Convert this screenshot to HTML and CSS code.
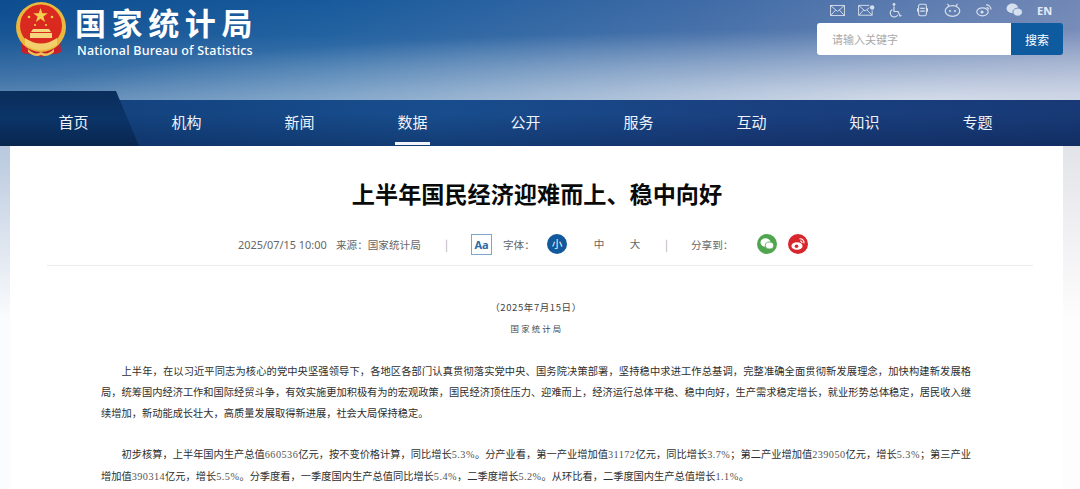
FILE: index.html
```html
<!DOCTYPE html>
<html lang="zh-CN">
<head>
<meta charset="utf-8">
<title>上半年国民经济迎难而上、稳中向好</title>
<link rel="stylesheet" href="styles.css">
</head>
<body>
<header class="masthead">
  <div class="brand">
    <svg class="emblem" viewBox="0 0 52 56" aria-hidden="true">
      <path d="M7 38 L6 50 Q12 53 17 52 L26 55 L35 52 Q40 53 46 50 L45 38 Z" fill="#c8202a"/>
      <circle cx="26" cy="25" r="25" fill="#eab83c"/>
      <circle cx="26" cy="23.500" r="21" fill="#da2a1f"/>
      <path d="M10 36 Q26 47 42 36 L42 43 Q26 53 10 43 Z" fill="#f2cf6a"/>
      <polygon points="25.500,6 27.300,11.200 32.800,11.300 28.400,14.600 30,19.900 25.500,16.800 21,19.900 22.600,14.600 18.200,11.300 23.700,11.200" fill="#f5cf50"/>
      <circle cx="14" cy="15" r="1.300" fill="#f5cf50"/><circle cx="37" cy="15" r="1.300" fill="#f5cf50"/>
      <circle cx="20" cy="23" r="1.100" fill="#f5cf50"/><circle cx="31" cy="23" r="1.100" fill="#f5cf50"/>
      <path d="M18 27 H34 L36 30 H16 Z M15 31 H37 V36 H15 Z" fill="#f4d67c"/>
      <path d="M13 47 Q20 54 26 50 Q32 54 39 47 L39 50 Q32 56 26 53 Q20 56 13 50 Z" fill="#eec058"/>
    </svg>
    <div class="brand-text">
      <div class="brand-cn">国家统计局</div>
      <div class="brand-en">National Bureau of Statistics</div>
    </div>
  </div>
  <div class="tools">
    <div class="tool-icons">
      <svg class="ti w15" viewBox="0 0 16 12"><rect x=".6" y=".6" width="14.800" height="10.800"/><path d="M1 1 L8 7 L15 1 M1 11 L6 5.500 M15 11 L10 5.500"/></svg>
      <svg class="ti w17" viewBox="0 0 18 12"><path d="M12 .6 H.6 V11 H15 V6"/><path d="M1 1 L7.500 6.500 L12 3 M1 11 L6 5.500 M15 11 L9.500 5.500"/><circle class="fill" cx="15" cy="2.800" r="2.300"/></svg>
      <svg class="ti w13" viewBox="0 0 13 15"><circle class="fill" cx="5" cy="1.500" r="1.400"/><path class="thick" d="M5 3.500 V8.500 H9 L11 13 L12.500 12.400"/><path class="thick" d="M3.300 6.500 A4 4 0 1 0 8.700 12"/></svg>
      <svg class="ti w11" viewBox="0 0 12 14"><rect class="thick" x="1.700" y=".8" width="8.600" height="12.400" rx="2"/><path class="thick" d="M.6 5 V9 M11.400 5 V9"/><rect class="fill" x="3.500" y="4.500" width="5" height="1.400"/><rect class="fill" x="3.500" y="7.500" width="5" height="1.400"/></svg>
      <svg class="ti w17" viewBox="0 0 17 14"><ellipse class="thick" cx="8.500" cy="8" rx="7.300" ry="5.300"/><path class="thick" d="M5 3 L3.500 .8 M12 3 L13.500 .8"/><circle class="fill" cx="6" cy="8" r="1"/><circle class="fill" cx="11" cy="8" r="1"/></svg>
      <svg class="ti w16" viewBox="0 0 16 13"><ellipse class="thick" cx="6.500" cy="8.300" rx="5.700" ry="4"/><circle class="fill" cx="6" cy="8.500" r="1.600"/><path class="thick" d="M10 1.500 A4.500 4.500 0 0 1 15 6 M10.500 4 A2 2 0 0 1 12.700 6"/></svg>
      <svg class="ti w17" viewBox="0 0 16 13"><ellipse class="fill" cx="6" cy="5" rx="5.500" ry="4.600"/><ellipse class="fill bordered" cx="11" cy="8.500" rx="4.500" ry="3.800"/></svg>
      <span class="en">EN</span>
    </div>
    <form class="search">
      <span class="search-input">请输入关键字</span>
      <span class="search-btn">搜索</span>
    </form>
  </div>
</header>
<nav class="nav">
  <span class="home-tab" aria-hidden="true"></span>
  <a class="nav-item">首页</a>
  <a class="nav-item">机构</a>
  <a class="nav-item">新闻</a>
  <a class="nav-item active">数据</a>
  <a class="nav-item">公开</a>
  <a class="nav-item">服务</a>
  <a class="nav-item">互动</a>
  <a class="nav-item">知识</a>
  <a class="nav-item">专题</a>
</nav>
<main class="card">
  <h1 class="title">上半年国民经济迎难而上、稳中向好</h1>
  <div class="meta">
    <span class="date">2025/07/15 10:00</span>
    <span class="source">来源：国家统计局</span>
    <span class="sep sep-a">|</span>
    <span class="aa">Aa</span>
    <span class="font-label">字体：</span>
    <span class="size on">小</span>
    <span class="size">中</span>
    <span class="size">大</span>
    <span class="sep sep-b">|</span>
    <span class="share-label">分享到：</span>
    <span class="share wechat">
      <svg viewBox="0 0 20 20"><ellipse cx="8.500" cy="8.500" rx="5" ry="4.200" fill="#fff"/><ellipse cx="12.500" cy="11.500" rx="4.200" ry="3.500" fill="#fff" stroke="#4fa64f" stroke-width=".8"/></svg>
    </span>
    <span class="share weibo">
      <svg viewBox="0 0 20 20"><ellipse cx="9" cy="12" rx="5.600" ry="3.800" fill="#fff"/><circle cx="8.500" cy="12.200" r="1.800" fill="#d8262c"/><path d="M11.500 4.800 A4 4 0 0 1 16 9.300 M12 7 A2 2 0 0 1 14 9" fill="none" stroke="#fff" stroke-width="1.200"/></svg>
    </span>
  </div>
  <article class="article">
    <p class="dateline">（2025年7月15日）</p>
    <p class="issuer">国家统计局</p>
    <p class="para">上半年，在以习近平同志为核心的党中央坚强领导下，各地区各部门认真贯彻落实党中央、国务院决策部署，坚持稳中求进工作总基调，完整准确全面贯彻新发展理念，加快构建新发展格局，统筹国内经济工作和国际经贸斗争，有效实施更加积极有为的宏观政策，国民经济顶住压力、迎难而上，经济运行总体平稳、稳中向好，生产需求稳定增长，就业形势总体稳定，居民收入继续增加，新动能成长壮大，高质量发展取得新进展，社会大局保持稳定。</p>
    <p class="para">初步核算，上半年国内生产总值<span class="num">660536</span>亿元，按不变价格计算，同比增长<span class="num">5.3%</span>。分产业看，第一产业增加值<span class="num">31172</span>亿元，同比增长<span class="num">3.7%</span>；第二产业增加值<span class="num">239050</span>亿元，增长<span class="num">5.3%</span>；第三产业增加值<span class="num">390314</span>亿元，增长<span class="num">5.5%</span>。分季度看，一季度国内生产总值同比增长<span class="num">5.4%</span>，二季度增长<span class="num">5.2%</span>。从环比看，二季度国内生产总值增长<span class="num">1.1%</span>。</p>
  </article>
</main>
</body>
</html>
```
FILE: styles.css
```css
* { box-sizing: border-box; }
html, body { margin: 0; padding: 0; }
body {
  height: 489px;
  overflow: hidden;
  background:
    linear-gradient(180deg, #b8c8de 146px, #fbfcfd 320px) left top / 50% 100% no-repeat,
    linear-gradient(180deg, #e3e4e9 146px, #fdfdfd 320px) right top / 50% 100% no-repeat;
  font-family: "Noto Sans CJK SC", "Noto Sans", sans-serif;
}
.masthead {
  height: 100px;
  display: flex;
  justify-content: space-between;
  background:
    radial-gradient(ellipse 900px 72px at 85% 100%, rgba(255,255,255,.58), rgba(255,255,255,0)),
    linear-gradient(180deg, rgba(255,255,255,0) 0%, rgba(255,255,255,.05) 35%, rgba(255,255,255,.22) 78%, rgba(255,255,255,.34) 100%),
    linear-gradient(90deg, #0c4d90 0%, #175a9c 30%, #3f6ba6 65%, #7288b6 100%);
}
.brand { display: flex; padding: 2px 0 0 15px; }
.emblem { width: 52px; height: 56px; display: block; }
.brand-text { margin-left: 8px; color: #fff; }
.brand-cn {
  font-size: 31px;
  font-weight: 700;
  line-height: 40px;
  letter-spacing: 5.600px;
  white-space: nowrap;
}
.brand-en {
  font-family: "Noto Sans", sans-serif;
  font-size: 12.500px;
  line-height: 16px;
  letter-spacing: .22px;
  margin-top: 1px;
  margin-left: 2px;
  white-space: nowrap;
  font-weight: 500;
}
.tools { width: 250px; padding: 2px 17px 0 0; display: flex; flex-direction: column; align-items: flex-end; }
.tool-icons { height: 16px; width: 233px; display: flex; align-items: center; color: #d6dfed; margin-bottom: 5px; }
.ti { display: block; height: 13px; fill: none; stroke: currentColor; stroke-width: 1; flex: none; }
.ti .fill { fill: currentColor; stroke: none; }
.ti .bordered { stroke: #5f82b4; stroke-width: .8; }
.ti .thick { stroke-width: 1.200; }
.w11 { width: 11px; }
.w15 { width: 15px; }
.w16 { width: 16px; }
.w17 { width: 17px; }
.w13 { width: 13px; }
.tool-icons .ti:nth-child(2) { margin-left: 13px; }
.tool-icons .ti:nth-child(3) { margin-left: 14px; height: 15px; }
.tool-icons .ti:nth-child(4) { margin-left: 15px; height: 14px; }
.tool-icons .ti:nth-child(5) { margin-left: 16px; height: 14px; }
.tool-icons .ti:nth-child(6) { margin-left: 15px; height: 14px; }
.tool-icons .ti:nth-child(7) { margin-left: 14px; height: 14px; }
.en { margin-left: 14px; font-family: "Noto Sans", sans-serif; font-size: 11px; font-weight: 700; color: #e6ecf5; }
.search { display: flex; height: 32px; width: 246px; border-radius: 3px; overflow: hidden; }
.search-input { flex: 1; background: #fff; color: #a9a9a9; font-size: 11px; line-height: 32px; padding-left: 15px; }
.search-btn { width: 52px; background: #0f5b9f; color: #fff; font-size: 12px; line-height: 34px; text-align: center; }

.nav {
  position: relative;
  height: 46px;
  padding-left: 17px;
  display: flex;
  background:
    linear-gradient(180deg, rgba(0,0,30,0) 30%, rgba(0,0,30,.22) 100%),
    linear-gradient(90deg, #123f7a 0%, #184d8d 40%, #1a4080 70%, #173a76 100%);
}
.home-tab {
  position: absolute;
  left: 0;
  top: -9px;
  width: 139px;
  height: 55px;
  background: linear-gradient(180deg, #0a2e5c 0%, #0b3468 50%, #09264e 100%);
  clip-path: polygon(0 0, 116px 0, 139px 100%, 0 100%);
}
.nav-item {
  position: relative;
  width: 113px;
  text-align: center;
  color: #eef3fa;
  font-size: 15px;
  line-height: 44px;
}
.nav-item.active::after {
  content: "";
  position: absolute;
  left: 39px;
  bottom: 1px;
  width: 35px;
  height: 3px;
  background: #f2f5fa;
}
.card {
  margin: 0 17px 0 10px;
  background: #fff;
  height: 343px;
  padding: 0 30px 0 37px;
}
.title {
  margin: 0;
  padding: 31px 6px 0 0;
  text-align: center;
  font-size: 23.150px;
  line-height: 32px;
  font-weight: 700;
  color: #0a0a0a;
}
.meta {
  margin-top: 25px;
  height: 31.500px;
  padding: 0 0 10px 191px;
  display: flex;
  align-items: center;
  color: #666;
  font-family: "Noto Sans CJK TC", "Noto Sans CJK SC", sans-serif;
  font-size: 10.600px;
  border-bottom: 1.500px solid #ebebeb;
  white-space: nowrap;
}
.date { font-family: "Noto Sans", sans-serif; font-size: 10.900px; width: 98px; }
.source { width: 86px; }
.sep { color: #aaa; font-size: 11px; }
.sep-a { margin-left: 23px; }
.aa {
  margin-left: 23px;
  flex: none;
  width: 21px;
  height: 21px;
  border: 1px solid #7ea6cb;
  color: #2a6ca8;
  font: 700 11px/19px "Noto Sans", sans-serif;
  text-align: center;
}
.font-label { margin-left: 11px; width: 44px; }
.size { flex: none; width: 20px; height: 20px; line-height: 20px; text-align: center; border-radius: 50%; margin-right: 16px; }
.size.on { background: #12599c; color: #fff; margin-right: 22px; }
.sep-b { margin-left: 4px; }
.share-label { margin-left: 23px; width: 66px; }
.share { flex: none; width: 20px; height: 20px; border-radius: 50%; display: block; margin-right: 11px; }
.share svg { display: block; width: 20px; height: 20px; }
.wechat { background: #4fa64f; }
.weibo { background: #d8262c; }
.article { padding: 0 62px 0 54px; color: #2e2e2e; font-size: 10.240px; }
.article p { margin: 0; }
.article .dateline {
  padding-top: 31px;
  text-align: center;
  line-height: 21px;
  color: #444;
  font-size: 9.500px;
  letter-spacing: .6px;
  font-feature-settings: "halt";
}
.article .issuer { padding: 0 0 2px 2px; text-align: center; font-size: 8.400px; line-height: 21px; letter-spacing: 2.200px; color: #444; }
.article .para {
  font-family: "Liberation Serif", "Noto Sans CJK SC", serif;
  line-height: 21.300px;
  text-indent: 2em;
  text-align: justify;
  margin-top: 20px;
}
.num { letter-spacing: .45px; color: #555; }
```
